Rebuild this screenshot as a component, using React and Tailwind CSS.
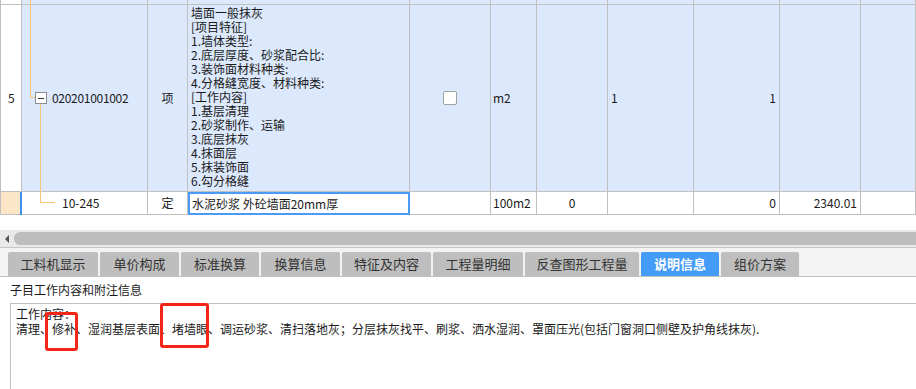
import React from "react";

const cols =
  "grid-cols-[21px_126px_40px_222px_81px_46px_71px_86px_86px_81px_1fr]";
const cell = "border-r border-b border-[#c0c0c0] relative";
const orange = "bg-[#f8c47c]";

const tabs = [
  { label: "工料机显示", w: "w-[90px]" },
  { label: "单价构成", w: "w-[79px]" },
  { label: "标准换算", w: "w-[78px]" },
  { label: "换算信息", w: "w-[79px]" },
  { label: "特征及内容", w: "w-[89px]" },
  { label: "工程量明细", w: "w-[90px]" },
  { label: "反查图形工程量", w: "w-[114px]" },
  { label: "说明信息", w: "w-[78px]", active: true },
  { label: "组价方案", w: "w-[78px]" },
];

const desc = [
  "墙面一般抹灰",
  "[项目特征]",
  "1.墙体类型:",
  "2.底层厚度、砂浆配合比:",
  "3.装饰面材料种类:",
  "4.分格缝宽度、材料种类:",
  "[工作内容]",
  "1.基层清理",
  "2.砂浆制作、运输",
  "3.底层抹灰",
  "4.抹面层",
  "5.抹装饰面",
  "6.勾分格缝",
];

export default function App() {
  return (
    <div className="relative w-[916px] h-[389px] overflow-hidden bg-white text-[#1a1a1a] font-['Noto_Sans_CJK_SC',sans-serif]">
      {/* grid */}
      <div className={`grid ${cols} border-l border-[#c0c0c0] text-[12px]`}>
        {/* partial top row */}
        <div className={`${cell} h-[5px] bg-white`} />
        <div className={`${cell} bg-[#dce8fc]`}>
          <div className={`absolute left-[8px] top-0 bottom-[-1px] w-[1px] ${orange}`} />
        </div>
        {Array.from({ length: 9 }).map((_, i) => (
          <div key={i} className={`${cell} bg-[#dce8fc]`} />
        ))}

        {/* row 5 */}
        <div className={`${cell} h-[187px] bg-white flex items-center pl-[7px]`}>5</div>
        <div className={`${cell} bg-[#dce8fc] flex items-center`}>
          <div className={`absolute left-[8px] top-0 h-[93px] w-[1px] ${orange}`} />
          <div className={`absolute left-[8px] top-[92px] w-[5px] h-[1px] ${orange}`} />
          <div className={`absolute left-[18px] top-[98px] bottom-[-1px] w-[1px] ${orange}`} />
          <div className="absolute left-[13px] top-[87px] w-[12px] h-[12px] border border-[#8c8c8c] bg-white flex items-center justify-center">
            <div className="w-[6px] h-[1px] bg-[#333]" />
          </div>
          <span className="ml-[30px] tracking-[-0.3px]">020201001002</span>
        </div>
        <div className={`${cell} bg-[#dce8fc] flex items-center justify-center`}>项</div>
        <div className={`${cell} bg-[#dce8fc] pl-[3px] pt-[1px] leading-[14px]`}>
          {desc.map((d) => (
            <div key={d}>{d}</div>
          ))}
        </div>
        <div className={`${cell} bg-[#dce8fc] flex items-center justify-center`}>
          <div className="w-[14px] h-[14px] rounded-[2px] border border-[#a0a0a0] bg-white" />
        </div>
        <div className={`${cell} bg-[#dce8fc] flex items-center pl-[2px]`}>m2</div>
        <div className={`${cell} bg-[#dce8fc]`} />
        <div className={`${cell} bg-[#dce8fc] flex items-center pl-[3px]`}>1</div>
        <div className={`${cell} bg-[#dce8fc] flex items-center justify-end pr-[3px]`}>1</div>
        <div className={`${cell} bg-[#dce8fc]`} />
        <div className={`${cell} bg-[#dce8fc]`} />

        {/* row 6 */}
        <div className={`${cell} h-[23px] bg-[#fde6c8]`} />
        <div className={`${cell} bg-white flex items-center`}>
          <div className="absolute left-[-2px] top-0 bottom-[-1px] w-[2px] bg-[#3f8ff0]" />
          <div className={`absolute left-[18px] top-0 h-[11px] w-[1px] ${orange}`} />
          <div className={`absolute left-[18px] top-[10px] w-[15px] h-[1px] ${orange}`} />
          <span className="ml-[40px]">10-245</span>
        </div>
        <div className={`${cell} bg-white flex items-center justify-center`}>定</div>
        <div className={`${cell} bg-white`}>
          <div className="absolute left-0 top-0 right-[-1px] bottom-[-1px] border-2 border-[#4a9bf5] flex items-center pl-[2px] whitespace-nowrap overflow-hidden">
            水泥砂浆 外砼墙面20mm厚
          </div>
        </div>
        <div className={`${cell} bg-white`} />
        <div className={`${cell} bg-white flex items-center pl-[2px]`}>100m2</div>
        <div className={`${cell} bg-white flex items-center justify-center`}>0</div>
        <div className={`${cell} bg-white`} />
        <div className={`${cell} bg-white flex items-center justify-end pr-[3px]`}>0</div>
        <div className={`${cell} bg-white flex items-center justify-end pr-[3px]`}>2340.01</div>
        <div className={`${cell} bg-white`} />
      </div>

      {/* gap */}
      <div className="h-[15px]" />

      {/* horizontal scrollbar */}
      <div className="h-[2px] bg-[#e8e8e8]" />
      <div className="flex h-[13px] bg-[#e9e9e9]">
        <div className="w-[14px] flex items-center justify-center">
          <div className="w-0 h-0 border-y-[4px] border-y-transparent border-r-[4px] border-r-[#555]" />
        </div>
        <div className="flex-1 bg-[#bebebe] rounded-l-[6px]" />
      </div>
      <div className="h-[2px] bg-[#e8e8e8]" />
      <div className="h-[1px] bg-[#c6c6c6]" />

      {/* tabs */}
      <div className="bg-[#f3f3f3] h-[29px] pt-[4px] pl-[8px] flex gap-[2px] border-b border-[#c0c0c0] text-[13px]">
        {tabs.map((t) => (
          <div
            key={t.label}
            className={`${t.w} h-[24px] rounded-t-[2px] flex items-center justify-center ${
              t.active ? "bg-[#449bf8] text-white font-bold" : "bg-[#bebebe] text-[#333]"
            }`}
          >
            {t.label}
          </div>
        ))}
      </div>

      {/* details */}
      <div className="pl-[10px] pt-[5px] text-[12px] leading-[16px]">子目工作内容和附注信息</div>
      <div className="ml-[10px] mt-[5px] h-[120px] border-l border-t border-[#c0c0c0] pl-[5px] pt-[2px] text-[12px] leading-[15px] whitespace-nowrap">
        <div>工作内容：</div>
        <div>
          清理、修补、湿润基层表面、堵墙眼、调运砂浆、清扫落地灰；分层抹灰找平、刷浆、洒水湿润、罩面压光(包括门窗洞口侧壁及护角线抹灰).
        </div>
      </div>

      {/* red annotation boxes */}
      <div className="absolute left-[45px] top-[312px] w-[33px] h-[39px] border-[3px] border-[#f42617] rounded-[3px]" />
      <div className="absolute left-[160px] top-[303px] w-[49px] h-[45px] border-[3px] border-[#f42617] rounded-[3px]" />
    </div>
  );
}
